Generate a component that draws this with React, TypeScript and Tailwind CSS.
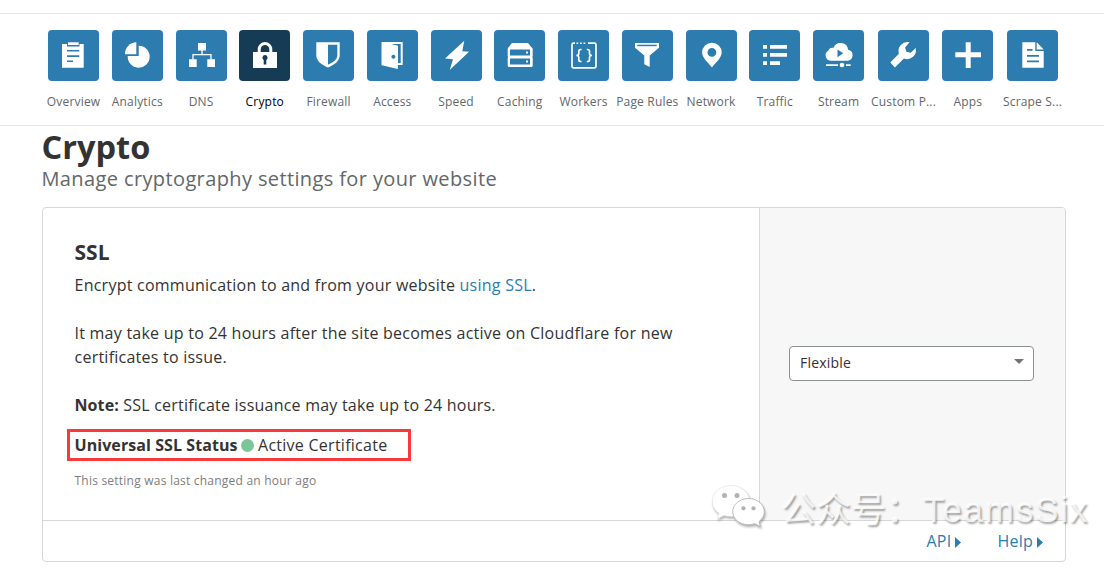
import React from "react";

const items: { label: string; active?: boolean; width?: string; icon: React.ReactNode }[] = [
  {
    label: "Overview",
    icon: (
      <>
        <path d="M14 14h5v2.5h12.5V14h4.2v23.7H14z" />
        <path d="M20 12.3h10.7V15H20z" />
        <path className="fill-[#2c7cb0]" d="M19 20h12.3v1.6H19zM19 25.3h12.3v1.6H19zM19 30.4h6v1.6h-6z" />
      </>
    ),
  },
  {
    label: "Analytics",
    icon: (
      <>
        <path d="M13 24.2A11.5 11.5 0 0 1 24.3 12.3V24.2z" />
        <path d="M26.7 15.7A11 11 0 1 1 15.7 26H26.7z" />
      </>
    ),
  },
  {
    label: "DNS",
    icon: (
      <>
        <path d="M22 13h8v7.4h-8zM13 29.3h7.7V37H13zM31.3 29.3H39V37h-7.7z" />
        <path className="fill-none stroke-white" strokeWidth="1.3" d="M26 20v4.6M17 29.5v-4.9h18v4.9" />
      </>
    ),
  },
  {
    label: "Crypto",
    active: true,
    icon: (
      <>
        <path d="M14 22h24v16H14z" />
        <path className="fill-none stroke-white" strokeWidth="3" d="M20.2 22.5v-3.2a5.8 5.8 0 0 1 11.6 0v3.2" />
        <path className="fill-[#163b55]" d="M26 25a2.7 2.7 0 0 1 1.3 5v4.6h-2.6V30A2.7 2.7 0 0 1 26 25z" />
      </>
    ),
  },
  {
    label: "Firewall",
    icon: (
      <>
        <path d="M13.3 12.3h23.4v13c0 6-5.5 9.8-11.7 12.1-6.2-2.3-11.7-6.1-11.7-12.1z" />
        <path className="fill-[#2c7cb0]" d="M25 14.8h9.3v10.5c0 4.5-4 7.2-9.3 9.3z" />
      </>
    ),
  },
  {
    label: "Access",
    icon: (
      <>
        <path d="M14.7 12h21v23h-21z" />
        <path className="fill-[#2c7cb0]" d="M23.5 14h10.2v19H31V15.7z" />
        <path d="M14.7 12l16.2 4v23l-16.2-3.8z" />
        <circle className="fill-[#2c7cb0]" cx="26.4" cy="26.7" r="2" />
      </>
    ),
  },
  { label: "Speed", icon: <path d="M33.3 10.7 31.3 21.3 38 21.7 18.7 40 22 29.3 14 28.5z" /> },
  {
    label: "Caching",
    icon: (
      <>
        <path d="M18 13h16l4 5H14z" />
        <rect x="13.7" y="17.5" width="25" height="9.7" rx="1.5" />
        <rect x="13.7" y="26.5" width="25" height="10.5" rx="1.5" />
        <path className="fill-[#2c7cb0]" d="M16 19.5h20v6H16zM16 28.5h20v6H16z" />
        <path d="M32 21.5h2v2h-2zM32 30.5h2v2h-2z" />
      </>
    ),
  },
  {
    label: "Workers",
    icon: (
      <>
        <path
          className="fill-none stroke-white"
          strokeWidth="1.7"
          d="M17 13.2h-1.5a1.5 1.5 0 0 0-1.5 1.5v21.6a1.5 1.5 0 0 0 1.5 1.5h21a1.5 1.5 0 0 0 1.5-1.5V14.7a1.5 1.5 0 0 0-1.5-1.5H30"
        />
        <path d="M18.5 12.4h1.8v1.6h-1.8zM22 12.4h1.8v1.6H22zM25.5 12.4h1.8v1.6h-1.8z" />
        <path
          className="fill-none stroke-white"
          strokeWidth="1.7"
          d="M23.5 19.5h-.7q-2 0-2 1.8v2.2q0 1.8-2.3 2 2.3.2 2.3 2v2.2q0 1.8 2 1.8h.7M28.8 19.5h.7q2 0 2 1.8v2.2q0 1.8 2.3 2-2.3.2-2.3 2v2.2q0 1.8-2 1.8h-.7"
        />
      </>
    ),
  },
  {
    label: "Page Rules",
    icon: (
      <>
        <path d="M13 13h24v4.7L27.7 25.5V37l-5.4-2.7v-8.8L13 17.7z" />
        <path className="fill-[#2c7cb0]" d="M15.3 14.7h19.4v1.5H15.3z" />
      </>
    ),
  },
  {
    label: "Network",
    icon: (
      <path
        fillRule="evenodd"
        d="M25.9 12.7a9.8 9.8 0 0 1 9.8 9.7c0 5-5 9-9.8 15-4.8-6-9.8-10-9.8-15a9.8 9.8 0 0 1 9.8-9.7zM25.9 18a4.4 4.4 0 1 0 0 8.8 4.4 4.4 0 0 0 0-8.8z"
      />
    ),
  },
  {
    label: "Traffic",
    icon: (
      <path d="M14 15h4v3.7h-4zM21 15h17v3.7H21zM14 23h4v3.7h-4zM21 23h17v3.7H21zM14 31.3h4V35h-4zM21 31.3h10V35H21z" />
    ),
  },
  {
    label: "Stream",
    icon: (
      <>
        <path d="M18 30.7a5.4 5.4 0 0 1-2.8-10 4.8 4.8 0 0 1 5.3-2.9 7.6 7.6 0 0 1 14.6 2 5.5 5.5 0 0 1-.8 10.9z" />
        <path className="fill-[#2c7cb0]" d="M24.5 19.5 30.2 23.3 24.5 27.2z" />
        <path d="M13 34.2h12V36H13zM33 34.2h4.7V36H33z" />
        <circle cx="29" cy="35" r="2.3" />
      </>
    ),
  },
  {
    label: "Custom P...",
    width: "w-[66.2px]",
    icon: (
      <path d="M31.5 12.3a9 9 0 0 0-10.6 11.5L12.3 32.6l4.6 5 9-9A9 9 0 0 0 37.7 18l-5 4.7-4.3-.9-1.3-4.3z" />
    ),
  },
  {
    label: "Apps",
    width: "w-[62.6px]",
    icon: <path d="M23.7 12.3h5v10h10.3v5H28.7V38h-5V27.3H13.3v-5h10.4z" />,
  },
  {
    label: "Scrape S...",
    width: "w-[66.6px]",
    icon: (
      <>
        <path d="M15.3 12.3h13v8.7h8.4v16.7H15.3z" />
        <path d="M29.7 12.3 36.7 19.5h-7z" />
        <path className="fill-[#2c7cb0]" d="M20 19h5.5v1.8H20zM20 25h12v1.8H20zM20 30.5h12v1.8H20z" />
      </>
    ),
  },
];

export default function App() {
  return (
    <div className="relative h-[574px] w-[1104px] overflow-hidden bg-white pt-[13px] font-['Open_Sans','Noto_Sans',sans-serif] text-[#333]">
      <nav className="flex h-[113px] border-y border-[#e5e5e5] pt-4 pl-[41.7px]">
        {items.map((item) => (
          <a key={item.label} className={`flex shrink-0 flex-col items-center ${item.width ?? "w-[63.76px]"}`}>
            <span
              className={
                item.active
                  ? "block size-[51px] rounded-[4px] bg-[#163b55]"
                  : "block size-[51px] rounded-[4px] bg-[#2c7cb0]"
              }
            >
              <svg viewBox="0 0 51 51" className="size-[51px] fill-white">
                {item.icon}
              </svg>
            </span>
            <span
              className={
                item.active
                  ? "mt-3 text-[12px] leading-[18px] tracking-[0.18px] whitespace-nowrap text-black"
                  : "mt-3 text-[12px] leading-[18px] tracking-[0.18px] whitespace-nowrap text-[#62676a]"
              }
            >
              {item.label}
            </span>
          </a>
        ))}
      </nav>

      <main className="pl-[41.5px]">
        <h1 className="h-[40px] text-[32.5px] leading-[41px] font-bold">Crypto</h1>
        <p className="h-[41px] text-[20px] leading-[26px] tracking-[0.38px] text-[#62676a]">
          Manage cryptography settings for your website
        </p>

        <section className="ml-[0.5px] h-[355px] w-[1024px] rounded-[4px] border border-[#d5d7d8]">
          <div className="flex h-[313px] border-b border-[#d5d7d8]">
            <div className="w-[716px] pt-[30px] pl-[31.5px] text-[16px] leading-6">
              <h2 className="text-[21px] leading-[29px] font-bold">SSL</h2>
              <p className="mt-[6px] tracking-[0.245px] whitespace-nowrap">
                Encrypt communication to and from your website <a className="text-[#2c7cb0]">using SSL</a>.
              </p>
              <p className="mt-6 tracking-[0.24px] whitespace-nowrap">
                It may take up to 24 hours after the site becomes active on Cloudflare for new
                <br />
                certificates to issue.
              </p>
              <p className="mt-6 tracking-[0.22px] whitespace-nowrap">
                <strong className="tracking-[0.1px]">Note:</strong> SSL certificate issuance may take up to 24 hours.
              </p>
              <div className="mt-[12px] -ml-[7.5px] flex h-[32px] w-[344px] items-center border-[3px] border-[#f93a3a] pl-[4.5px] whitespace-nowrap">
                <strong className="tracking-[0.07px]">Universal SSL Status</strong>
                <span className="mr-[4px] ml-[3.5px] size-[13px] rounded-full bg-[#7ac698]" />
                <span className="tracking-[0.26px]">Active Certificate</span>
              </div>
              <p className="mt-[10px] text-[12px] leading-5 tracking-[0.22px] text-[#7d7d7d]">
                This setting was last changed an hour ago
              </p>
            </div>
            <div className="flex flex-1 items-center rounded-tr-[3px] border-l border-[#d5d7d8] bg-[#f7f7f7] pb-[2px] pl-[29px]">
              <div className="flex h-[35px] w-[245px] items-center justify-between rounded-[4px] border border-[#8b9093] bg-white pr-[9px] pb-[2px] pl-[10px] text-[14px] tracking-[0.2px]">
                <span>Flexible</span>
                <svg viewBox="0 0 10 5" className="mb-[2px] h-[5px] w-[10px] fill-[#6f7677]">
                  <path d="M0 0h10L5 5z" />
                </svg>
              </div>
            </div>
          </div>
          <div className="flex h-[40px] items-center justify-end gap-[36px] pr-[22px] text-[16px] tracking-[0.25px] text-[#2c7cb0]">
            {["API", "Help"].map((label) => (
              <a key={label} className="flex items-center gap-[4px]">
                {label}
                <svg viewBox="0 0 6 11" className="mt-[3px] h-[11px] w-[6px] fill-[#2c7cb0]">
                  <path d="M0 0 6 5.5 0 11z" />
                </svg>
              </a>
            ))}
          </div>
        </section>
      </main>

      <div className="absolute top-[480px] left-[710px] flex h-[60px] w-[394px] items-center">
        <svg viewBox="0 0 60 60" className="size-[60px] shrink-0 drop-shadow-[1px_2px_1px_rgba(0,0,0,0.3)]">
          <path
            className="fill-white stroke-[#d8d8d8]"
            strokeWidth=".5"
            d="M21 5.500C10.500 5.500 2.300 12.500 2.300 21.300c0 5 2.600 9.300 6.700 12L7.300 39l6.700-3.400c2.500.7 4.800 1 7.300 1C31.500 36.600 39.500 30 39.500 21S31 5.500 21 5.500z"
          />
          <path
            className="fill-white stroke-[#b5b5b5]"
            strokeWidth=".9"
            d="M38.500 18.500c8.800 0 15.800 6 15.800 13.300 0 4-2 7.300-5.300 9.800l1.400 5-5.600-2.900c-2 .6-4 1-6.300 1-8.800 0-15.800-5.700-15.800-12.900s7-13.300 15.800-13.300z"
          />
          <g className="fill-[#b2b2b2]">
            <circle cx="14.5" cy="15.5" r="2.5" />
            <circle cx="27" cy="15.5" r="2.5" />
            <circle cx="33.5" cy="28.3" r="2.1" />
            <circle cx="43.5" cy="28.3" r="2.1" />
          </g>
        </svg>
        <span className="mb-[1px] ml-[11px] font-['Liberation_Sans','Noto_Sans_CJK_SC',sans-serif] text-[35px] leading-none whitespace-nowrap text-white/80 [text-shadow:1.5px_2px_2px_rgba(0,0,0,0.36)]">
          公众号：<span className="ml-[2px] tracking-[1.8px]">TeamsSix</span>
        </span>
      </div>
    </div>
  );
}
